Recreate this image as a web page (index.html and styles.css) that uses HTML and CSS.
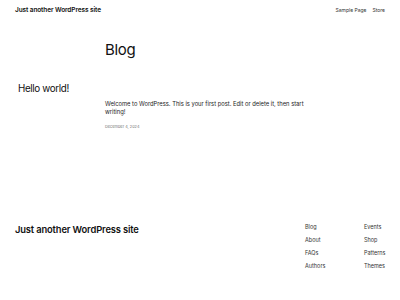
FILE: index.html
```html
<!DOCTYPE html>
<html lang="en">
<head>
  <meta charset="UTF-8" />
  <title>Blog</title>
  <link rel="stylesheet" href="styles.css">
</head>
<body>
  <header class="site-header">
    <a class="site-title" href="#">Just another WordPress site</a>
    <nav class="site-nav">
      <a href="#">Sample Page</a>
      <a href="#">Store</a>
    </nav>
  </header>

  <main>
    <h1 class="page-title">Blog</h1>

    <article class="post">
      <h2 class="post-title">Hello world!</h2>
      <div class="post-body">
        <p class="excerpt">Welcome to WordPress. This is your first post. Edit or delete it, then start writing!</p>
        <div class="post-date">December 4, 2024</div>
      </div>
    </article>
  </main>

  <footer class="site-footer">
    <div class="footer-title">Just another WordPress site</div>
    <div class="footer-links">
      <ul>
        <li><a href="#">Blog</a></li>
        <li><a href="#">About</a></li>
        <li><a href="#">FAQs</a></li>
        <li><a href="#">Authors</a></li>
      </ul>
      <ul>
        <li><a href="#">Events</a></li>
        <li><a href="#">Shop</a></li>
        <li><a href="#">Patterns</a></li>
        <li><a href="#">Themes</a></li>
      </ul>
    </div>
  </footer>
</body>
</html>
```

FILE: styles.css
```css
body {
  margin: 0;
  background: #ffffff;
  color: #111111;
  font-family: Inter, "Noto Sans", sans-serif;
  width: 400px;
  height: 300px;
  overflow: hidden;
}
a {
  color: inherit;
  text-decoration: none;
}
.site-header {
  display: flex;
  justify-content: space-between;
  align-items: center;
  height: 20px;
  padding: 0 15px;
}
.site-title {
  font-size: 6.5px;
  font-weight: 600;
  letter-spacing: -0.1px;
}
.site-nav {
  display: flex;
  gap: 6px;
  font-size: 5px;
  color: #333;
}
.page-title {
  margin: 21px 0 0 105px;
  font-size: 15px;
  font-weight: 400;
  letter-spacing: -0.3px;
  line-height: 18px;
}
.post {
  display: flex;
  margin-top: 23px;
}
.post-title {
  width: 87px;
  margin: 0;
  padding-left: 18px;
  font-size: 9.8px;
  font-weight: 400;
  letter-spacing: -0.35px;
  line-height: 14px;
}
.post-body {
  width: 205px;
  padding-top: 18px;
}
.excerpt {
  margin: 0;
  font-size: 5.8px;
  line-height: 7.5px;
  color: #222;
}
.post-date {
  margin-top: 9px;
  font-size: 3.9px;
  color: #777;
}
.site-footer {
  display: flex;
  justify-content: space-between;
  margin-top: 92px;
  padding: 0 15px;
}
.footer-title {
  font-size: 9.4px;
  font-weight: 600;
  letter-spacing: -0.15px;
  margin-top: 3px;
}
.footer-links {
  display: flex;
}
.footer-links ul {
  list-style: none;
  margin: 0;
  padding: 0;
  width: 59px;
}
.footer-links ul:last-child {
  width: 21px;
}
.footer-links li {
  font-size: 5.5px;
  line-height: 13px;
  color: #333;
  white-space: nowrap;
}
```
